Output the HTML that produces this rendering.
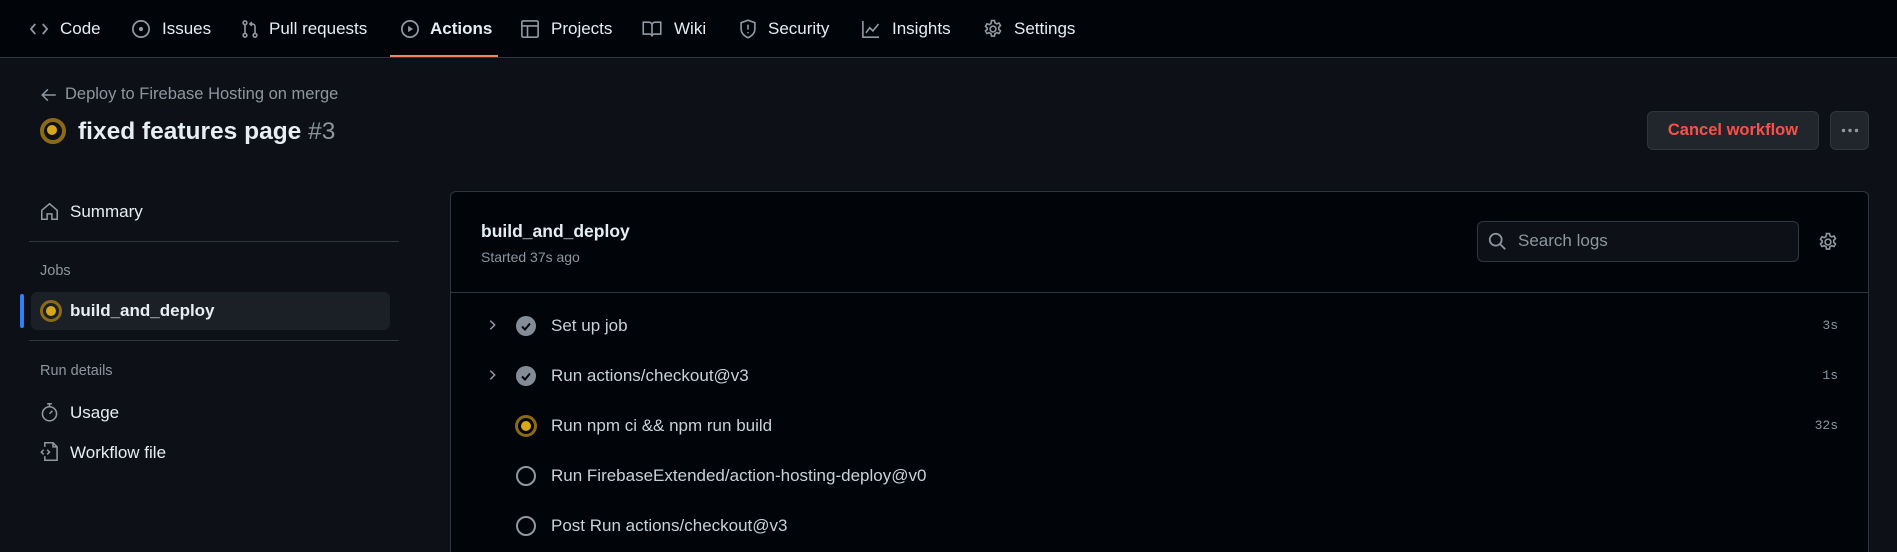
<!DOCTYPE html>
<html style="width:1897px;height:552px;overflow:hidden"><head><meta charset="utf-8"><style>
*{box-sizing:border-box;margin:0;padding:0}
body{width:1897px;height:552px;overflow:hidden;background:#0d1117;font-family:"Liberation Sans",sans-serif;color:#e6edf3;position:relative}
.abs{position:absolute;white-space:nowrap}
.nav{position:absolute;left:0;top:0;width:1897px;height:58px;background:#010409;border-bottom:1px solid #30363d}
.ni{position:absolute;top:19px;font-size:17px;color:#e6edf3;line-height:20px}
.nic{position:absolute;top:19px}
.muted{color:#8d96a0}
svg{display:block}
.run{position:absolute;width:22px;height:22px;border-radius:50%;border:3px solid #8a6a14;}
.run::after{content:"";position:absolute;left:3px;top:3px;width:10px;height:10px;border-radius:50%;background:#d8a71a}
.done{position:absolute;width:20px;height:20px;border-radius:50%;background:#848d97}
.pend{position:absolute;width:20px;height:20px;border-radius:50%;border:2px solid #9198a1}
.step{position:absolute;left:551px;font-size:17px;color:#c9d1d9;line-height:20px}
.tm{position:absolute;right:59px;font-family:"Liberation Mono",monospace;font-size:13px;color:#8d96a0}
</style></head><body>
<div class="nav">
 <svg class="nic" style="left:29px" width="20" height="20" viewBox="0 0 16 16" fill="none" stroke="#9198a1" stroke-width="1.4"><path d="M5 4 1.5 8 5 12M11 4l3.5 4-3.5 4"/></svg>
 <div class="ni" style="left:60px">Code</div>
 <svg class="nic" style="left:131px" width="20" height="20" viewBox="0 0 16 16" fill="none" stroke="#9198a1" stroke-width="1.4"><circle cx="8" cy="8" r="6.5"/><circle cx="8" cy="8" r="1" fill="#9198a1"/></svg>
 <div class="ni" style="left:162px">Issues</div>
 <svg class="nic" style="left:240px" width="20" height="20" viewBox="0 0 16 16" fill="none" stroke="#9198a1" stroke-width="1.3"><circle cx="4" cy="3" r="1.5"/><circle cx="4" cy="13" r="1.5"/><circle cx="12" cy="13" r="1.5"/><path d="M4 4.5v7M12 11.5V6a2 2 0 0 0-2-2H8M9.5 2.5 8 4l1.5 1.5"/></svg>
 <div class="ni" style="left:269px">Pull requests</div>
 <svg class="nic" style="left:400px" width="20" height="20" viewBox="0 0 16 16" fill="none" stroke="#9198a1" stroke-width="1.4"><circle cx="8" cy="8" r="6.5"/><path d="M6.5 5.5v5l4-2.5z" fill="#9198a1" stroke="none"/></svg>
 <div class="ni" style="left:430px;font-weight:bold">Actions</div>
 <div style="position:absolute;left:390px;top:55px;width:108px;height:2px;background:#f78166"></div>
 <svg class="nic" style="left:520px" width="20" height="20" viewBox="0 0 16 16" fill="none" stroke="#9198a1" stroke-width="1.3"><rect x="1.5" y="1.5" width="13" height="13" rx="1"/><path d="M1.5 5.5h13M6 5.5v9"/></svg>
 <div class="ni" style="left:551px">Projects</div>
 <svg class="nic" style="left:642px" width="20" height="20" viewBox="0 0 16 16" fill="none" stroke="#9198a1" stroke-width="1.3"><path d="M1 2.5h4.5A2.5 2.5 0 0 1 8 5v9a2 2 0 0 0-2-2H1zM15 2.5h-4.5A2.5 2.5 0 0 0 8 5v9a2 2 0 0 1 2-2h5z"/></svg>
 <div class="ni" style="left:674px">Wiki</div>
 <svg class="nic" style="left:738px" width="20" height="20" viewBox="0 0 16 16" fill="none" stroke="#9198a1" stroke-width="1.3"><path d="M8 1 2.5 3v5c0 3.5 3 5.8 5.5 7 2.5-1.2 5.5-3.5 5.5-7V3z"/><path d="M8 4.5v4M8 10.5v1"/></svg>
 <div class="ni" style="left:768px">Security</div>
 <svg class="nic" style="left:861px" width="20" height="20" viewBox="0 0 16 16" fill="none" stroke="#9198a1" stroke-width="1.3"><path d="M1.5 1.5v13h13M4 11l3-4 2.5 2.5L14 4"/></svg>
 <div class="ni" style="left:892px">Insights</div>
 <svg class="nic" style="left:983px" width="20" height="20" viewBox="0 0 16 16" fill="none" stroke="#9198a1" stroke-width="1.3"><circle cx="8" cy="8" r="2.3"/><path d="M6.8 1.2h2.4l.4 1.9 1.4.8 1.8-.7 1.2 2.1-1.4 1.3v1.6l1.4 1.3-1.2 2.1-1.8-.7-1.4.8-.4 1.9H6.8l-.4-1.9-1.4-.8-1.8.7-1.2-2.1 1.4-1.3V7.2L2 5.9l1.2-2.1 1.8.7 1.4-.8z"/></svg>
 <div class="ni" style="left:1014px">Settings</div>
</div>

<svg class="abs" style="left:40px;top:86px" width="18" height="18" viewBox="0 0 16 16" fill="none" stroke="#8d96a0" stroke-width="1.4"><path d="M14 8H2M7 3 2 8l5 5"/></svg>
<div class="abs muted" style="left:65px;top:85px;font-size:16.5px">Deploy to Firebase Hosting on merge</div>
<div class="run" style="left:40px;top:118px;width:26px;height:26px;border-width:4px"></div>
<div class="abs" style="left:78px;top:118px;font-size:24.5px;font-weight:bold">fixed features page <span style="font-weight:normal;color:#8d96a0">#3</span></div>

<div class="abs" style="left:1647px;top:111px;width:172px;height:39px;background:#21262d;border:1px solid #30363d;border-radius:6px;color:#f85149;font-size:16.5px;font-weight:bold;text-align:center;line-height:37px">Cancel workflow</div>
<div class="abs" style="left:1830px;top:111px;width:39px;height:39px;background:#21262d;border:1px solid #30363d;border-radius:6px"><svg style="margin:16px 0 0 10px" width="18" height="5" viewBox="0 0 18 5" fill="#9198a1"><circle cx="2.5" cy="2.5" r="1.7"/><circle cx="9" cy="2.5" r="1.7"/><circle cx="15.5" cy="2.5" r="1.7"/></svg></div>

<svg class="abs" style="left:40px;top:202px" width="19" height="19" viewBox="0 0 16 16" fill="none" stroke="#9198a1" stroke-width="1.3"><path d="M1.5 7 8 1.5 14.5 7v7.5h-4.5V10H6v4.5H1.5z"/></svg>
<div class="abs" style="left:70px;top:202px;font-size:17px">Summary</div>
<div class="abs" style="left:29px;top:241px;width:370px;height:1px;background:#30363d"></div>
<div class="abs muted" style="left:40px;top:263px;font-size:14.5px">Jobs</div>
<div class="abs" style="left:31px;top:292px;width:359px;height:38px;background:#1b1f26;border-radius:6px"></div>
<div class="abs" style="left:20px;top:294px;width:4px;height:34px;background:#2f81f7;border-radius:2px"></div>
<div class="run" style="left:40px;top:300px"></div>
<div class="abs" style="left:70px;top:301px;font-size:17px;font-weight:bold">build_and_deploy</div>
<div class="abs" style="left:29px;top:340px;width:370px;height:1px;background:#30363d"></div>
<div class="abs muted" style="left:40px;top:363px;font-size:14.5px">Run details</div>
<svg class="abs" style="left:40px;top:402px" width="19" height="20" viewBox="0 0 16 17" fill="none" stroke="#9198a1" stroke-width="1.3"><circle cx="8" cy="10" r="6"/><path d="M6 1.5h4M8 1.5v2.5M8 10l2.5-2.5"/></svg>
<div class="abs" style="left:70px;top:403px;font-size:17px">Usage</div>
<svg class="abs" style="left:40px;top:441px" width="19" height="21" viewBox="0 0 16 18" fill="none" stroke="#9198a1" stroke-width="1.3"><path d="M4 5V1.5h7l3.5 3.5v11.5H4V13M11 1.5V5h3.5M3 7.5 1 9.5l2 2M6 7.5l2 2-2 2"/></svg>
<div class="abs" style="left:70px;top:443px;font-size:17px">Workflow file</div>

<div class="abs" style="left:450px;top:191px;width:1419px;height:361px;background:#010409;border:1px solid #30363d;border-bottom:none;border-radius:6px 6px 0 0"></div>
<div class="abs" style="left:451px;top:292px;width:1417px;height:1px;background:#30363d"></div>
<div class="abs" style="left:481px;top:221px;font-size:17.5px;font-weight:bold">build_and_deploy</div>
<div class="abs muted" style="left:481px;top:249px;font-size:14px">Started 37s ago</div>
<div class="abs" style="left:1477px;top:221px;width:322px;height:41px;background:#0d1117;border:1px solid #30363d;border-radius:6px"></div>
<svg class="abs" style="left:1488px;top:232px" width="19" height="19" viewBox="0 0 16 16" fill="none" stroke="#8d96a0" stroke-width="1.5"><circle cx="6.5" cy="6.5" r="5"/><path d="m10.2 10.2 4.3 4.3"/></svg>
<div class="abs muted" style="left:1518px;top:231px;font-size:17px">Search logs</div>
<svg class="abs" style="left:1818px;top:232px" width="20" height="20" viewBox="0 0 16 16" fill="none" stroke="#9198a1" stroke-width="1.3"><circle cx="8" cy="8" r="2.3"/><path d="M6.8 1.2h2.4l.4 1.9 1.4.8 1.8-.7 1.2 2.1-1.4 1.3v1.6l1.4 1.3-1.2 2.1-1.8-.7-1.4.8-.4 1.9H6.8l-.4-1.9-1.4-.8-1.8.7-1.2-2.1 1.4-1.3V7.2L2 5.9l1.2-2.1 1.8.7 1.4-.8z"/></svg>

<svg class="abs" style="left:485px;top:318px" width="14" height="14" viewBox="0 0 16 16" fill="none" stroke="#9198a1" stroke-width="1.8"><path d="m6 3 5 5-5 5"/></svg>
<div class="done" style="left:516px;top:316px"><svg width="20" height="20" viewBox="0 0 20 20" fill="none" stroke="#010409" stroke-width="2"><path d="m6 10.5 3 3 5-6"/></svg></div>
<div class="step" style="top:316px">Set up job</div><div class="tm" style="top:318px">3s</div>

<svg class="abs" style="left:485px;top:368px" width="14" height="14" viewBox="0 0 16 16" fill="none" stroke="#9198a1" stroke-width="1.8"><path d="m6 3 5 5-5 5"/></svg>
<div class="done" style="left:516px;top:366px"><svg width="20" height="20" viewBox="0 0 20 20" fill="none" stroke="#010409" stroke-width="2"><path d="m6 10.5 3 3 5-6"/></svg></div>
<div class="step" style="top:366px">Run actions/checkout@v3</div><div class="tm" style="top:368px">1s</div>

<div class="run" style="left:515px;top:415px"></div>
<div class="step" style="top:416px">Run npm ci &amp;&amp; npm run build</div><div class="tm" style="top:418px">32s</div>

<div class="pend" style="left:516px;top:466px"></div>
<div class="step" style="top:466px">Run FirebaseExtended/action-hosting-deploy@v0</div>

<div class="pend" style="left:516px;top:516px"></div>
<div class="step" style="top:516px">Post Run actions/checkout@v3</div>
</body></html>
